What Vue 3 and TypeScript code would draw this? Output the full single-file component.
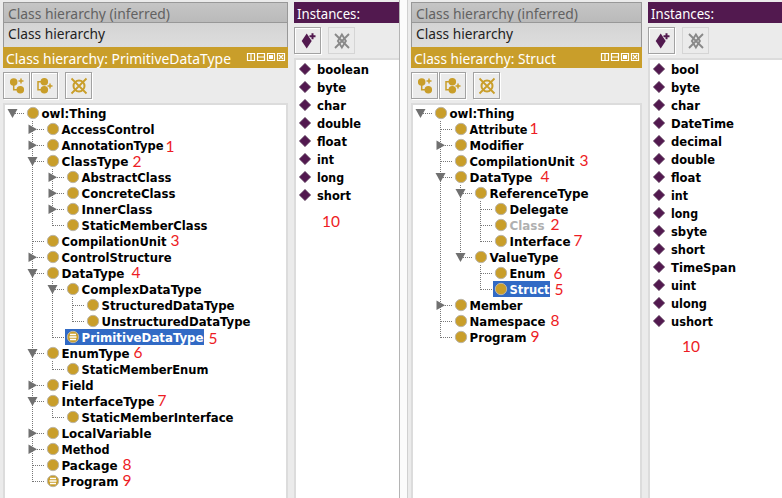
<script setup lang="ts">
interface Note { text: string; x: number; y: number }
interface TreeItem { label: string; depth: number; width: number; arrow?: 'open' | 'closed'; defined?: boolean; selected?: boolean; muted?: boolean; note?: Note }
interface Instance { label: string; width: number }
interface Panel { title: string; titleWidth: number; items: TreeItem[]; instances: Instance[]; side: string }

const note = (text: string, x: number, y = 13): Note => ({ text, x, y })

const panels: Panel[] = [
  {
    side: 'left', title: 'Class hierarchy: PrimitiveDataType', titleWidth: 225,
    items: [
      { label: 'owl:Thing', depth: 0, width: 65, arrow: 'open' },
      { label: 'AccessControl', depth: 1, width: 93, arrow: 'closed' },
      { label: 'AnnotationType', depth: 1, width: 102, arrow: 'closed', note: note('1', 105, 15) },
      { label: 'ClassType', depth: 1, width: 67, arrow: 'open', note: note('2', 72, 14) },
      { label: 'AbstractClass', depth: 2, width: 90, arrow: 'closed' },
      { label: 'ConcreteClass', depth: 2, width: 94, arrow: 'closed' },
      { label: 'InnerClass', depth: 2, width: 71, arrow: 'closed' },
      { label: 'StaticMemberClass', depth: 2, width: 126 },
      { label: 'CompilationUnit', depth: 1, width: 105, note: note('3', 110) },
      { label: 'ControlStructure', depth: 1, width: 110, arrow: 'closed' },
      { label: 'DataType', depth: 1, width: 63, arrow: 'open', note: note('4', 71) },
      { label: 'ComplexDataType', depth: 2, width: 120, arrow: 'open' },
      { label: 'StructuredDataType', depth: 3, width: 133 },
      { label: 'UnstructuredDataType', depth: 3, width: 149 },
      { label: 'PrimitiveDataType', depth: 2, width: 122, defined: true, selected: true, note: note('5', 128, 15) },
      { label: 'EnumType', depth: 1, width: 68, arrow: 'open', note: note('6', 73) },
      { label: 'StaticMemberEnum', depth: 2, width: 127 },
      { label: 'Field', depth: 1, width: 32, arrow: 'closed' },
      { label: 'InterfaceType', depth: 1, width: 93, arrow: 'open', note: note('7', 97) },
      { label: 'StaticMemberInterface', depth: 2, width: 152 },
      { label: 'LocalVariable', depth: 1, width: 90, arrow: 'closed' },
      { label: 'Method', depth: 1, width: 48, arrow: 'closed' },
      { label: 'Package', depth: 1, width: 56, note: note('8', 62) },
      { label: 'Program', depth: 1, width: 57, defined: true, note: note('9', 62) },
    ],
    instances: [
      { label: 'boolean', width: 52 }, { label: 'byte', width: 29 }, { label: 'char', width: 29 },
      { label: 'double', width: 44 }, { label: 'float', width: 30 }, { label: 'int', width: 17 },
      { label: 'long', width: 27 }, { label: 'short', width: 34 },
    ],
  },
  {
    side: 'right', title: 'Class hierarchy: Struct', titleWidth: 142,
    items: [
      { label: 'owl:Thing', depth: 0, width: 65, arrow: 'open' },
      { label: 'Attribute', depth: 1, width: 58, note: note('1', 61) },
      { label: 'Modifier', depth: 1, width: 54, arrow: 'closed' },
      { label: 'CompilationUnit', depth: 1, width: 105, note: note('3', 111) },
      { label: 'DataType', depth: 1, width: 63, arrow: 'open', note: note('4', 72) },
      { label: 'ReferenceType', depth: 2, width: 99, arrow: 'open' },
      { label: 'Delegate', depth: 3, width: 59 },
      { label: 'Class', depth: 3, width: 35, muted: true, note: note('2', 42) },
      { label: 'Interface', depth: 3, width: 61, note: note('7', 65) },
      { label: 'ValueType', depth: 2, width: 69, arrow: 'open' },
      { label: 'Enum', depth: 3, width: 36, note: note('6', 45, 14) },
      { label: 'Struct', depth: 3, width: 40, selected: true, note: note('5', 46, 14) },
      { label: 'Member', depth: 1, width: 53, arrow: 'closed' },
      { label: 'Namespace', depth: 1, width: 76, note: note('8', 82) },
      { label: 'Program', depth: 1, width: 57, note: note('9', 62) },
    ],
    instances: [
      { label: 'bool', width: 28 }, { label: 'byte', width: 29 }, { label: 'char', width: 29 },
      { label: 'DateTime', width: 63 }, { label: 'decimal', width: 51 }, { label: 'double', width: 44 },
      { label: 'float', width: 30 }, { label: 'int', width: 17 }, { label: 'long', width: 27 },
      { label: 'sbyte', width: 36 }, { label: 'short', width: 34 }, { label: 'TimeSpan', width: 65 },
      { label: 'uint', width: 25 }, { label: 'ulong', width: 36 }, { label: 'ushort', width: 42 },
    ],
  },
]

// A level's line runs on below a row when a later sibling follows before the branch closes.
function continues(items: TreeItem[], index: number, level: number): boolean {
  for (let i = index + 1; i < items.length; i++) {
    if (items[i].depth < level) return false
    if (items[i].depth === level) return true
  }
  return false
}

function guides(items: TreeItem[], index: number): string {
  const depth = items[index].depth
  let d = ''
  for (let level = 1; level <= depth; level++) {
    const x = 7.5 + level * 20
    const more = continues(items, index, level)
    if (level === depth) d += `M${x} 0V${more ? 16 : 9}`
    else if (more) d += `M${x} 0V16`
  }
  return d + `M${8 + depth * 20} 8.5H${19 + depth * 20}`
}

function arrowPath(item: TreeItem): string {
  const x = 7.5 + item.depth * 20
  return item.arrow === 'open' ? `M${x - 5} 4h10l-5 9z` : `M${x - 4} 3.5v9.500l8.500-4.750z`
}
</script>

<template>
  <div class="screen">
    <main v-for="p in panels" :key="p.side" class="window" :class="p.side">
      <section class="hierarchy">
        <div class="tab inactive">
          <svg class="text" width="270" height="19"><text x="4" y="16" textLength="162" lengthAdjust="spacingAndGlyphs">Class hierarchy (inferred)</text></svg>
        </div>
        <div class="tab active">
          <svg class="text" width="270" height="24"><text x="4" y="16" textLength="97" lengthAdjust="spacingAndGlyphs">Class hierarchy</text></svg>
        </div>
        <header class="titlebar">
          <svg class="text" width="238" height="21"><text x="3" y="17" :textLength="p.titleWidth" lengthAdjust="spacingAndGlyphs">{{ p.title }}</text></svg>
          <svg class="controls" width="38" height="8" fill="none" stroke="#fff" stroke-width="1.200">
            <path d="M.5.5h7v7h-7zM4 0v8M10.500.5h7v7h-7zM10 4h8M20.500.5h7v7h-7zM30.500.5h7v7h-7zM32 2l4 4M36 2l-4 4" />
            <path d="M22 2h4v4h-4z" fill="#fff" stroke="none" />
          </svg>
        </header>
        <div class="toolbar class-tools">
          <button class="tool" aria-label="Add subclass">
            <svg width="25" height="25" fill="none" stroke="#c99e2a" stroke-width="1.500">
              <path d="M9.700 9v7.700H16M14.500 8h5M17 5.500v5" /><circle cx="9.700" cy="9" r="3" fill="#c99e2a" /><circle cx="16.300" cy="16.700" r="3" fill="#c99e2a" />
            </svg>
          </button>
          <button class="tool" aria-label="Add sibling class">
            <svg width="25" height="25" fill="none" stroke="#c99e2a" stroke-width="1.500">
              <path d="M12 8.700H6v8h6M15.500 13h5M18 10.500v5" /><circle cx="12.300" cy="8.700" r="3" fill="#c99e2a" /><circle cx="12.300" cy="16.700" r="3" fill="#c99e2a" />
            </svg>
          </button>
          <button class="tool delete" aria-label="Delete class">
            <svg width="25" height="25" fill="none" stroke="#c99e2a" stroke-width="2">
              <circle cx="13" cy="13" r="5.500" /><path d="M5.500 5.500l15 15M20.500 5.500l-15 15" stroke-width="1.800" />
            </svg>
          </button>
        </div>
        <div class="tree">
          <div v-for="(item, i) in p.items" :key="item.label" class="tree-row">
            <svg class="branch" :width="20 + item.depth * 20" height="16">
              <path :d="guides(p.items, i)" class="guide" /><path v-if="item.arrow" :d="arrowPath(item)" fill="#707070" />
            </svg>
            <div class="node" :class="{ selected: item.selected, muted: item.muted }">
              <svg class="dot" width="14" height="16">
                <circle cx="8" cy="8" r="5.700" fill="#c99e2a" stroke="#bdb6a6" stroke-width="1" />
                <path v-if="item.defined" d="M5 5.500h6M4.500 8h7M5 10.500h6" stroke="#fff" stroke-width="1.300" />
              </svg>
              <svg class="label" :width="item.width + 3" height="16">
                <text x="2.5" y="13" :textLength="item.width" lengthAdjust="spacingAndGlyphs">{{ item.label }}</text>
                <text v-if="item.note" class="note" :x="item.note.x + 1.5" :y="item.note.y">{{ item.note.text }}</text>
              </svg>
            </div>
          </div>
        </div>
      </section>
      <section class="members">
        <header class="instance-title">
          <svg class="text" width="100" height="21"><text x="3" y="17" textLength="63" lengthAdjust="spacingAndGlyphs">Instances:</text></svg>
        </header>
        <div class="toolbar">
          <button class="tool" aria-label="Add instance">
            <svg width="25" height="25"><path d="M11.700 5.500l5 7.500-5 7.500-5-7.500z" fill="#52194f" /><path d="M14.500 8.300h6M17.500 5.300v6" stroke="#ebebeb" stroke-width="3.500" /><path d="M14.500 8.300h6M17.500 5.300v6" stroke="#52194f" stroke-width="2" /></svg>
          </button>
          <button class="tool disabled" aria-label="Delete instance" disabled>
            <svg width="25" height="25" fill="none" stroke="#898989" stroke-width="1.900"><path d="M12.900 6.500l4 6.500-4 6.500-4-6.500zM6 6l14 14M20 6L6 20" /></svg>
          </button>
        </div>
        <div class="list">
          <div v-for="instance in p.instances" :key="instance.label" class="instance">
            <svg class="diamond" width="14" height="18"><path d="M7 3.200l5.800 5.800L7 14.800 1.200 9z" fill="#52194f" stroke="#8a778a" stroke-width=".8" /></svg>
            <svg class="label" :width="instance.width" height="18"><text x="0" y="14" :textLength="instance.width" lengthAdjust="spacingAndGlyphs">{{ instance.label }}</text></svg>
          </div>
          <div class="count">10</div>
        </div>
      </section>
    </main>
  </div>
</template>

<style>
body { margin: 0; overflow: hidden; }
</style>

<style scoped>
* { box-sizing: border-box; }
svg { display: block; flex: none; overflow: visible; }
.screen { width: 782px; height: 498px; display: flex; justify-content: space-between; background: #fbfbfb; overflow: hidden; }
.window { height: 498px; padding-top: 2px; display: flex; gap: 6px; background: #ebebeb; }
.window.left { width: 400px; padding-left: 3px; border-right: 1px solid #b4b4b4; }
.window.right { width: 375px; padding-left: 3px; border-left: 1px solid #d0d0d0; }
.hierarchy { width: 285px; display: flex; flex-direction: column; flex: none; }
.window.right .hierarchy { width: 231px; }
.members { flex: 1; min-width: 0; display: flex; flex-direction: column; }
.text { font: 15px "Noto Sans", "Open Sans", sans-serif; }
.text text { fill: currentColor; }
.tab { flex: none; border: 1px solid #989898; border-bottom: 0; overflow: hidden; }
.tab.inactive { height: 20px; background: linear-gradient(#c5c5c5, #bababa); color: #626262; }
.tab.active { height: 25px; background: linear-gradient(#d4d4d4, #dddddd); color: #222; }
.titlebar { height: 21px; flex: none; display: flex; justify-content: space-between; background: #c99e2a; color: #fff; padding-right: 3px; }
.window.right .titlebar .text { width: 150px; }
.controls { margin-top: 6px; }
.toolbar { display: flex; gap: 7px; flex: none; height: 35px; padding-top: 4px; }
.class-tools { gap: 1px; }
.tool { width: 27px; height: 27px; padding: 0; flex: none; border: 1px solid #a2a2a2; background: #ebebeb; box-shadow: inset 1px 1px #fff, 1px 1px #fff; }
.tool.delete { margin-left: 6px; }
.tool.disabled { border-color: #d5d5d5; box-shadow: none; }
.tree { flex: 1; border: solid #dcdcdc; border-width: 2px 2px 0; background: #fff; }
.tree-row { display: flex; height: 16px; }
.guide { fill: none; stroke: #777; stroke-width: 1; stroke-dasharray: 1 1; }
.node { display: flex; height: 16px; }
.selected { background: #316ac5; }
.label { font: bold 13px "DejaVu Sans Condensed", "DejaVu Sans", sans-serif; font-stretch: condensed; fill: #000; }
.selected .label { fill: #fff; }
.muted .label { fill: #b0b0b0; }
.label .note { font: 15.5px Lato, sans-serif; fill: #ed1c24; }
.instance-title { height: 21px; flex: none; background: #52194f; color: #fff; }
.list { flex: 1; border: solid #dcdcdc; border-width: 2px 0 0 2px; background: #fff; }
.instance { display: flex; height: 18px; gap: 5px; padding-left: 2px; }
.count { font: 15.5px/20px Lato, sans-serif; color: #ed1c24; padding: 7px 0 0 26px; }
.window.right .count { padding: 6px 0 0 32px; }
</style>
